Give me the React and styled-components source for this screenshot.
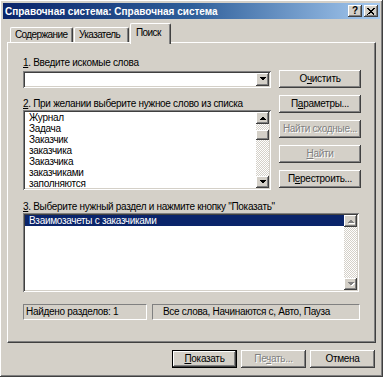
import React from "react";
import styled, { createGlobalStyle, css } from "styled-components";

const FACE = "#d4d0c8";

const GlobalStyle = createGlobalStyle`
  html, body {
    margin: 0;
    padding: 0;
    background: ${FACE};
  }
  body {
    font-family: "Liberation Sans", Arial, sans-serif;
    font-size: 10px;
  }
`;

const raised = css`
  box-shadow: inset -1px -1px #404040, inset 1px 1px #fff,
    inset -2px -2px #808080, inset 2px 2px ${FACE};
`;

const sunken = css`
  box-shadow: inset 1px 1px #808080, inset -1px -1px #fff,
    inset 2px 2px #404040, inset -2px -2px ${FACE};
`;

const Window = styled.div`
  width: 383px;
  height: 377px;
  box-sizing: border-box;
  padding: 3px;
  background: ${FACE};
  display: flex;
  flex-direction: column;
  font-size: 10px;
  letter-spacing: -0.3px;
  color: #000;
  ${raised}
`;

const TitleBar = styled.div`
  height: 16px;
  display: flex;
  align-items: center;
  padding: 0 2px 0 2px;
  background: linear-gradient(to right, #0a246a 0%, #2f5f9a 50%, #a6caf0 100%);
`;

const TitleText = styled.span`
  color: #fff;
  font-weight: bold;
  font-size: 10px;
  letter-spacing: 0;
  white-space: nowrap;
`;

const CaptionButtons = styled.div`
  margin-left: auto;
  display: flex;
  gap: 2px;
`;

const CaptionButton = styled.div`
  width: 14px;
  height: 12px;
  box-sizing: border-box;
  background: ${FACE};
  display: flex;
  align-items: center;
  justify-content: center;
  font-weight: bold;
  font-size: 10px;
  line-height: 12px;
  ${raised}
`;

const Body = styled.div`
  flex: 1;
  display: flex;
  flex-direction: column;
  padding: 0 4px;
`;

const TabRow = styled.div`
  margin-top: 4px;
  height: 19px;
  display: flex;
  align-items: flex-end;
  padding-left: 3px;
`;

const Tab = styled.div`
  position: relative;
  width: ${(p) => p.$w}px;
  height: ${(p) => (p.$active ? 21 : 15)}px;
  margin-right: 1px;
  margin-bottom: ${(p) => (p.$active ? -2 : 0)}px;
  z-index: ${(p) => (p.$active ? 2 : 0)};
  box-sizing: border-box;
  background: ${FACE};
  border-top: 1px solid #fff;
  border-left: 1px solid #fff;
  border-right: 1px solid #404040;
  border-radius: 2px 2px 0 0;
  box-shadow: inset -1px 0 #808080;
  padding: ${(p) => (p.$active ? 3 : 1)}px 0 0 ${(p) => p.$pad}px;
  line-height: 12px;
  letter-spacing: -0.6px;
  white-space: nowrap;
  overflow: hidden;
`;

const Panel = styled.div`
  height: 301px;
  box-sizing: border-box;
  border-top: 1px solid #fff;
  border-left: 1px solid #fff;
  border-right: 1px solid #404040;
  border-bottom: 1px solid #404040;
  box-shadow: inset -1px -1px #808080;
  padding: 13px 0 0 15px;
  display: flex;
  flex-direction: column;
`;

const TopSection = styled.div`
  display: flex;
  gap: 8px;
`;

const LeftCol = styled.div`
  width: 248px;
  display: flex;
  flex-direction: column;
`;

const RightCol = styled.div`
  width: 82px;
  padding-top: 14px;
  display: flex;
  flex-direction: column;
  gap: 7px;
`;

const Label = styled.div`
  height: 13px;
  line-height: 13px;
  white-space: nowrap;
  margin-top: ${(p) => p.$mt || 0}px;
`;

const Key = styled.span`
  text-decoration: underline;
`;

const Combo = styled.div`
  margin-top: 2px;
  height: 17px;
  box-sizing: border-box;
  padding: 2px;
  background: #fff;
  display: flex;
  justify-content: flex-end;
  ${sunken}
`;

const DropButton = styled.div`
  width: 13px;
  height: 13px;
  box-sizing: border-box;
  background: ${FACE};
  display: flex;
  align-items: center;
  justify-content: center;
  ${raised}
`;

const ListBox = styled.div`
  width: ${(p) => p.$w}px;
  height: ${(p) => p.$h}px;
  box-sizing: border-box;
  padding: 2px;
  background: #fff;
  display: flex;
  ${sunken}
`;

const Items = styled.div`
  flex: 1;
  overflow: hidden;
`;

const Item = styled.div`
  height: 11px;
  line-height: 11px;
  padding-left: 4px;
  white-space: nowrap;
  background: ${(p) => (p.$selected ? "#0a246a" : "transparent")};
  color: ${(p) => (p.$selected ? "#fff" : "#000")};
`;

const ScrollBar = styled.div`
  width: 13px;
  display: flex;
  flex-direction: column;
  background: repeating-conic-gradient(${FACE} 0 25%, #fff 0 50%) 0 0 / 2px 2px;
`;

const ScrollButton = styled.div`
  width: 13px;
  height: 12px;
  box-sizing: border-box;
  background: ${FACE};
  display: flex;
  align-items: center;
  justify-content: center;
  ${raised}
`;

const Thumb = styled.div`
  height: 10px;
  margin-top: 6px;
  box-sizing: border-box;
  background: ${FACE};
  ${raised}
`;

const Track = styled.div`
  flex: 1;
`;

const Button = styled.button`
  width: ${(p) => p.$w || 82}px;
  height: 18px;
  box-sizing: border-box;
  margin: 0;
  padding: 0;
  border: ${(p) => (p.$default ? "1px solid #000" : "none")};
  background: ${FACE};
  font: inherit;
  letter-spacing: inherit;
  line-height: 14px;
  white-space: nowrap;
  color: ${(p) => (p.disabled ? "#808080" : "#000")};
  text-shadow: ${(p) => (p.disabled ? "1px 1px #fff" : "none")};
  ${raised}
`;

const StatusRow = styled.div`
  margin-top: 12px;
  display: flex;
  gap: 5px;
`;

const StatusBox = styled.div`
  width: ${(p) => p.$w}px;
  height: 16px;
  box-sizing: border-box;
  border: 1px solid;
  border-color: #808080 #fff #fff #808080;
  padding-left: ${(p) => p.$pad}px;
  line-height: 14px;
  white-space: nowrap;
`;

const ButtonRow = styled.div`
  margin-top: 7px;
  display: flex;
  justify-content: flex-end;
  gap: 4px;
  padding-right: 1px;
`;

const Arrow = ({ dir = "down", disabled }) => {
  const pts = dir === "up" ? "0,4 7,4 3.5,0.5" : "0,0 7,0 3.5,3.5";
  return (
    <svg width="8" height="5" viewBox="0 0 8 5" shapeRendering="crispEdges">
      {disabled && (
        <polygon points={pts} fill="#fff" transform="translate(1,1)" />
      )}
      <polygon points={pts} fill={disabled ? "#808080" : "#000"} />
    </svg>
  );
};

const CloseGlyph = () => (
  <svg width="8" height="7" viewBox="0 0 8 7" shapeRendering="crispEdges">
    <path d="M0.5 0.5 L7 6.5 M1.5 0.5 L7.5 6.5 M7 0.5 L0.5 6.5 M7.5 0.5 L1.5 6.5" stroke="#000" strokeWidth="1" />
  </svg>
);

const words = [
  "Журнал",
  "Задача",
  "Заказчик",
  "заказчика",
  "Заказчика",
  "заказчиками",
  "заполняются",
];

export default function App() {
  return (
    <>
      <GlobalStyle />
      <Window>
        <TitleBar>
          <TitleText>Справочная система: Справочная система</TitleText>
          <CaptionButtons>
            <CaptionButton>?</CaptionButton>
            <CaptionButton>
              <CloseGlyph />
            </CaptionButton>
          </CaptionButtons>
        </TitleBar>
        <Body>
          <TabRow>
            <Tab $w={63} $pad={4}>Содержание</Tab>
            <Tab $w={55} $pad={4}>Указатель</Tab>
            <Tab $w={41} $pad={5} $active>Поиск</Tab>
          </TabRow>
          <Panel>
            <TopSection>
              <LeftCol>
                <Label>
                  <Key>1</Key>. Введите искомые слова
                </Label>
                <Combo>
                  <DropButton>
                    <Arrow dir="down" />
                  </DropButton>
                </Combo>
                <Label $mt={9}>
                  <Key>2</Key>. При желании выберите нужное слово из списка
                </Label>
                <ListBox $w={248} $h={80}>
                  <Items>
                    {words.map((w) => (
                      <Item key={w}>{w}</Item>
                    ))}
                  </Items>
                  <ScrollBar>
                    <ScrollButton>
                      <Arrow dir="up" />
                    </ScrollButton>
                    <Thumb />
                    <Track />
                    <ScrollButton>
                      <Arrow dir="down" />
                    </ScrollButton>
                  </ScrollBar>
                </ListBox>
              </LeftCol>
              <RightCol>
                <Button>
                  О<Key>ч</Key>истить
                </Button>
                <Button>
                  П<Key>а</Key>раметры...
                </Button>
                <Button disabled>Найти сходные...</Button>
                <Button disabled>
                  <Key>Н</Key>айти
                </Button>
                <Button>
                  П<Key>е</Key>рестроить...
                </Button>
              </RightCol>
            </TopSection>
            <Label $mt={10}>
              <Key>3</Key>. Выберите нужный раздел и нажмите кнопку "Показать"
            </Label>
            <ListBox $w={336} $h={79}>
              <Items>
                <Item $selected>Взаимозачеты с заказчиками</Item>
              </Items>
              <ScrollBar>
                <ScrollButton>
                  <Arrow dir="up" disabled />
                </ScrollButton>
                <Track />
                <ScrollButton>
                  <Arrow dir="down" disabled />
                </ScrollButton>
              </ScrollBar>
            </ListBox>
            <StatusRow>
              <StatusBox $w={124} $pad={2}>Найдено разделов: 1</StatusBox>
              <StatusBox $w={208} $pad={10}>
                Все слова, Начинаются с, Авто, Пауза
              </StatusBox>
            </StatusRow>
          </Panel>
          <ButtonRow>
            <Button $w={65} $default>
              <Key>П</Key>оказать
            </Button>
            <Button $w={65} disabled>
              Пе<Key>ч</Key>ать...
            </Button>
            <Button $w={65}>Отмена</Button>
          </ButtonRow>
        </Body>
      </Window>
    </>
  );
}
